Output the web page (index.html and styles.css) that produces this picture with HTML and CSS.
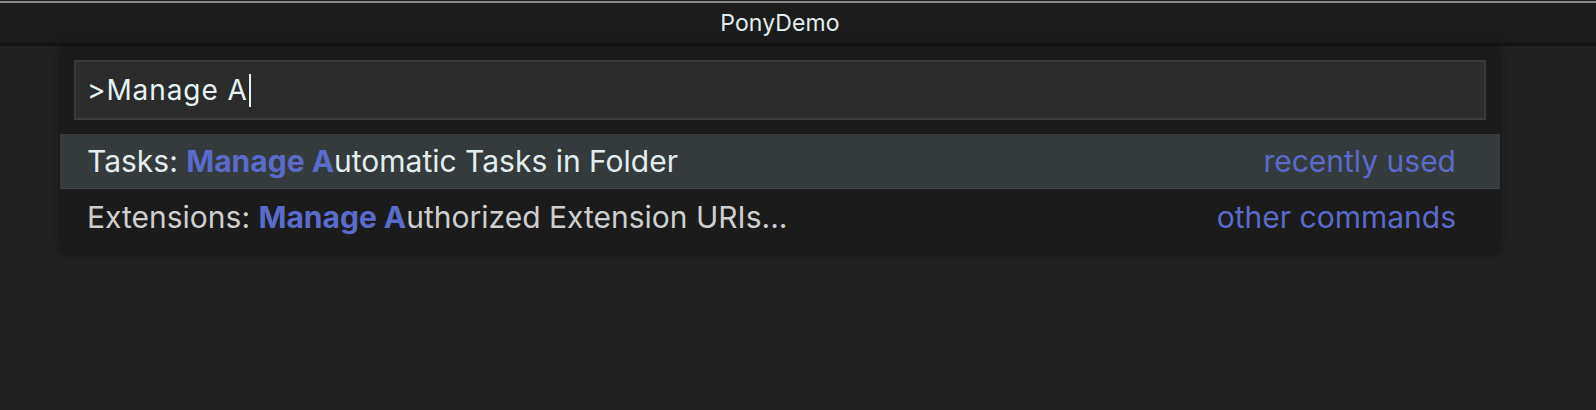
FILE: index.html
```html
<!DOCTYPE html>
<html>
<head>
<meta charset="utf-8">
<link rel="stylesheet" href="styles.css">
</head>
<body>
<div class="window">
  <div class="titlebar"><span class="title">PonyDemo</span></div>
  <div class="editor">
    <div class="palette">
      <div class="input-wrap">
        <div class="input"><span class="input-text">&gt;Manage A</span><span class="cursor"></span></div>
      </div>
      <div class="list">
        <div class="row selected">
          <span class="label">Tasks: <b class="hl">Manage A</b>utomatic Tasks in Folder</span>
          <span class="meta">recently used</span>
        </div>
        <div class="row">
          <span class="label">Extensions: <b class="hl">Manage A</b>uthorized Extension URIs...</span>
          <span class="meta">other commands</span>
        </div>
      </div>
    </div>
  </div>
</div>
</body>
</html>
```

FILE: styles.css
```css
* { box-sizing: border-box; }
html, body {
  margin: 0;
  padding: 0;
  background: #212121;
  width: 1596px;
  height: 410px;
  overflow: hidden;
  font-family: Inter, "Noto Sans", sans-serif;
}
.window {
  display: flex;
  flex-direction: column;
  height: 410px;
}
.titlebar {
  height: 46px;
  border-top: 1px solid #202020;
  box-shadow: inset 0 2px 0 #8a8a8a;
  background: #1c1c1c;
  border-bottom: 3px solid #141414;
  display: flex;
  align-items: center;
  justify-content: center;
  padding-top: 2px;
  padding-right: 36px;
}
.title {
  color: #e2eeee;
  font-size: 23px;
  letter-spacing: 0.1px;
}
.editor {
  flex: 1;
  padding: 0 96px 0 60px;
}
.palette {
  width: 1440px;
  background: #1b1b1b;
  padding: 14px 0 8px;
  box-shadow: 0 0 8px rgba(0,0,0,0.35);
}
.input-wrap {
  padding: 0 14px;
}
.input {
  height: 60px;
  background: #2b2b2b;
  border: 2px solid #3a3a3a;
  display: flex;
  align-items: center;
  padding-left: 11px;
}
.input-text {
  color: #e6f3f3;
  font-size: 28px;
  letter-spacing: 0.9px;
}
.cursor {
  width: 2px;
  height: 33px;
  background: #e6f3f3;
  margin-left: 1px;
}
.list {
  margin-top: 14px;
}
.row {
  height: 56px;
  display: flex;
  align-items: center;
  justify-content: space-between;
  padding: 0 44px 0 27px;
  font-size: 30px;
  color: #cfcfcf;
}
.row.selected {
  height: 55px;
  background: #353a3c;
  border-bottom: 1px solid #42444c;
  color: #e3eeee;
}
.hl {
  color: #5b6bcb;
  font-weight: 700;
}
.meta {
  color: #5b6bcb;
}
```
